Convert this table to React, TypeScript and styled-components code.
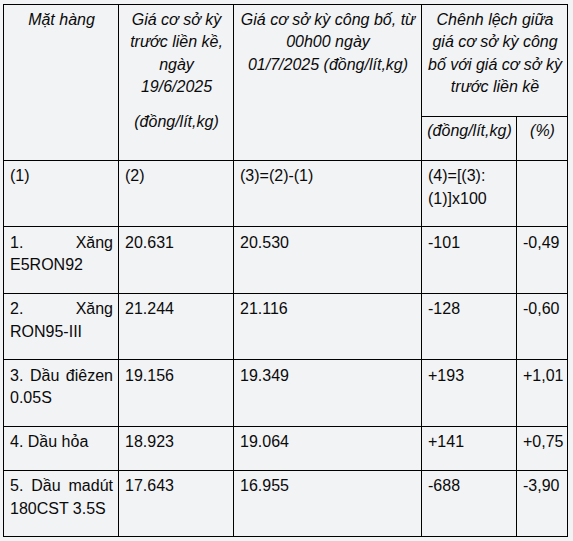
import styled, { createGlobalStyle } from "styled-components";

const GlobalStyle = createGlobalStyle`
  html, body {
    margin: 0;
    background: #f2f3f5;
  }
`;

type Row = {
  name: string;
  prev: string;
  current: string;
  diff: string;
  percent: string;
};

const rows: Row[] = [
  { name: "1. Xăng E5RON92", prev: "20.631", current: "20.530", diff: "-101", percent: "-0,49" },
  { name: "2. Xăng RON95-III", prev: "21.244", current: "21.116", diff: "-128", percent: "-0,60" },
  { name: "3. Dầu điêzen 0.05S", prev: "19.156", current: "19.349", diff: "+193", percent: "+1,01" },
  { name: "4. Dầu hỏa", prev: "18.923", current: "19.064", diff: "+141", percent: "+0,75" },
  { name: "5. Dầu madút 180CST 3.5S", prev: "17.643", current: "16.955", diff: "-688", percent: "-3,90" },
];

export default function App() {
  return (
    <Page>
      <GlobalStyle />
      <Table>
        <colgroup>
          <col style={{ width: 115 }} />
          <col style={{ width: 115 }} />
          <col style={{ width: 188 }} />
          <col style={{ width: 95 }} />
          <col style={{ width: 51 }} />
        </colgroup>
        <tbody>
          <tr>
            <HeadCell rowSpan={2}>
              <Para>Mặt hàng</Para>
            </HeadCell>
            <HeadCell rowSpan={2}>
              <Para>
                Giá cơ sở kỳ
                <br />
                trước liền kề,
                <br />
                ngày
                <br />
                19/6/2025
              </Para>
              <Para>(đồng/lít,kg)</Para>
            </HeadCell>
            <HeadCell rowSpan={2}>
              <Para>
                Giá cơ sở kỳ công bố, từ
                <br />
                00h00 ngày
                <br />
                01/7/2025 (đồng/lít,kg)
              </Para>
            </HeadCell>
            <HeadCell colSpan={2}>
              <Para>
                Chênh lệch giữa
                <br />
                giá cơ sở kỳ công
                <br />
                bố với giá cơ sở kỳ
                <br />
                trước liền kề
              </Para>
            </HeadCell>
          </tr>
          <tr>
            <HeadCell>
              <Para>(đồng/lít,kg)</Para>
            </HeadCell>
            <HeadCell>
              <Para>(%)</Para>
            </HeadCell>
          </tr>
          <tr>
            <Cell>(1)</Cell>
            <Cell>(2)</Cell>
            <Cell>(3)=(2)-(1)</Cell>
            <Cell>(4)=[(3):(1)]x100</Cell>
            <Cell></Cell>
          </tr>
          {rows.map((row) => (
            <tr key={row.name}>
              <Cell $justify>{row.name}</Cell>
              <Cell>{row.prev}</Cell>
              <Cell>{row.current}</Cell>
              <Cell>{row.diff}</Cell>
              <Cell>{row.percent}</Cell>
            </tr>
          ))}
        </tbody>
      </Table>
    </Page>
  );
}

const Page = styled.div`
  padding: 4px 0 0 3px;
  font-family: "Liberation Sans", Arial, sans-serif;
  font-size: 16px;
  line-height: 22.5px;
  color: #0a0a0a;
`;

const Table = styled.table`
  width: 564px;
  table-layout: fixed;
  border-collapse: collapse;
  background: #f2f3f5;
`;

const HeadCell = styled.td`
  border: 1px solid #000;
  padding: 3.5px 4px 17px 5px;
  vertical-align: top;
  text-align: center;
  font-style: italic;
  font-weight: normal;
  white-space: nowrap;
`;

const Cell = styled.td<{ $justify?: boolean }>`
  border: 1px solid #000;
  padding: 4.5px 5px 16px 6px;
  vertical-align: top;
  text-align: ${(p) => (p.$justify ? "justify" : "left")};
`;

const Para = styled.p`
  margin: 0;
  & + & {
    margin-top: 12px;
  }
`;
